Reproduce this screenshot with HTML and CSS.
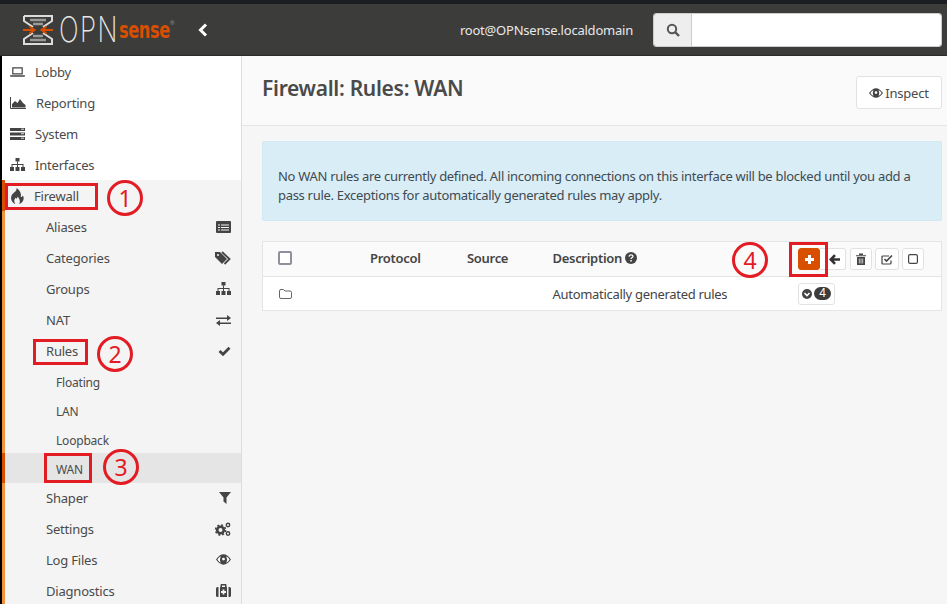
FILE: index.html
```html
<!DOCTYPE html>
<html lang="en">
<head>
<meta charset="utf-8">
<title>Firewall: Rules: WAN</title>
<link rel="stylesheet" href="styles.css">
</head>
<body>
<div class="page">
  <header class="topbar">
    <div class="logo">
      <svg class="logo-mark" viewBox="0 0 30 30" width="30" height="30">
        <path d="M1 1H29V6L20 12M10 12L1 6V1M10 18L1 24V29H29V24L20 18" fill="none" stroke="#dcdcdc" stroke-width="2"/>
        <path d="M7 5H23M10 9H20M10 21H20M7 25H23" stroke="#9a9a9a" stroke-width="2.500"/>
        <path d="M0 15H11M6.500 11.500L11.500 15L6.500 18.500M30 15H19M23.500 11.500L18.500 15L23.500 18.500" fill="none" stroke="#d94f00" stroke-width="2"/>
      </svg>
      <span class="logo-opn">OPN</span><span class="logo-sense">sense</span><span class="logo-reg">®</span>
    </div>
    <svg class="collapse" viewBox="0 0 10 14" width="10" height="14"><path d="M8 1.500L2.500 7L8 12.500" fill="none" stroke="#fff" stroke-width="3"/></svg>
    <span class="user">root@OPNsense.localdomain</span>
    <div class="search">
      <span class="search-btn"><svg viewBox="0 0 14 14" width="14" height="14"><circle cx="6" cy="6" r="4.200" fill="none" stroke="#555" stroke-width="2"/><path d="M9 9L13 13" stroke="#555" stroke-width="2.400"/></svg></span>
      <span class="search-input"></span>
    </div>
  </header>
  <div class="body">
    <nav class="sidebar">
      <a class="row top"><svg class="ico-l" viewBox="0 0 16 12" width="15" height="12"><path d="M3 1.500H13V8H3Z" fill="none" stroke="#444" stroke-width="1.300"/><path d="M0 9.500H16V10.500L15 11H1L0 10.500Z" fill="#444"/></svg>Lobby</a>
      <a class="row top"><svg class="ico-l" viewBox="0 0 16 12" width="16" height="12"><path d="M0.500 0V11.500H16" fill="none" stroke="#444"/><path d="M2 10.500V7L5 4L7.500 6L10 2L13 6L15.500 8V10.500Z" fill="#444"/></svg>Reporting</a>
      <a class="row top"><svg class="ico-l" viewBox="0 0 15 12" width="15" height="12"><path d="M0 0H15V3H0ZM0 4.500H15V7.500H0ZM0 9H15V12H0Z" fill="#444"/><path d="M11 1.200H14M11 5.700H14M11 10.200H14" stroke="#ddd"/></svg>System</a>
      <a class="row top"><svg class="ico-l" viewBox="0 0 15 13" width="15" height="13"><use href="#sitemap"/></svg>Interfaces</a>
      <div class="fw">
        <a class="row top active"><svg class="ico-l flame" viewBox="0 0 14 15" width="15" height="16"><path d="M6 0C7 3 3 4 1.500 7C0 10 2 14 5 15C3.500 13 3.500 10.500 5.500 9C5.500 11 7 10 7 8C9 10 10 13 8.500 15C12 14 14 10 12 7C11.500 8 11 8.500 10 8.500C11 5 9 2 6 0Z" fill="#444"/></svg>Firewall</a>
        <a class="row sub">Aliases<svg viewBox="0 0 15 12" width="15" height="12"><path d="M1 0H14Q15 0 15 1V11Q15 12 14 12H1Q0 12 0 11V1Q0 0 1 0Z" fill="#444"/><path d="M2 4H4M5 4H13M2 6.500H4M5 6.500H13M2 9H4M5 9H13" stroke="#f4f4f4" stroke-width="1.200"/></svg></a>
        <a class="row sub">Categories<svg viewBox="0 0 16 14" width="16" height="14"><path d="M0 1V6L7 13L12 8L5 1Z" fill="#444"/><path d="M7 1L14.500 8L9.500 13" fill="none" stroke="#444" stroke-width="1.800"/><circle cx="3" cy="4" r="1" fill="#f4f4f4"/></svg></a>
        <a class="row sub">Groups<svg viewBox="0 0 15 13" width="15" height="13"><use href="#sitemap"/></svg></a>
        <a class="row sub">NAT<svg viewBox="0 0 15 12" width="15" height="12"><path d="M0 3.500H11V1L15 4L11 7V5H0ZM15 8.500H4V6L0 9L4 12V10H15Z" fill="#444"/></svg></a>
        <a class="row sub">Rules<svg viewBox="0 0 13 10" width="13" height="10"><path d="M1.500 5L5 8.300L11.500 1.800" fill="none" stroke="#444" stroke-width="2.800"/></svg></a>
        <a class="row subsub first">Floating</a>
        <a class="row subsub">LAN</a>
        <a class="row subsub">Loopback</a>
        <a class="row subsub current">WAN</a>
        <a class="row sub">Shaper<svg viewBox="0 0 12 12" width="12" height="12"><path d="M0 0H12L7.500 5.500V12L4.500 9.500V5.500Z" fill="#444"/></svg></a>
        <a class="row sub">Settings<svg viewBox="0 0 16 14" width="16" height="14"><circle cx="5.500" cy="8" r="3.300" fill="none" stroke="#444" stroke-width="2.600"/><circle cx="5.500" cy="8" r="5" fill="none" stroke="#444" stroke-width="1.600" stroke-dasharray="2 1.930"/><circle cx="13" cy="3" r="1.700" fill="none" stroke="#444" stroke-width="1.400"/><circle cx="13" cy="11.500" r="1.700" fill="none" stroke="#444" stroke-width="1.400"/></svg></a>
        <a class="row sub">Log Files<svg viewBox="0 0 16 11" width="15" height="11"><use href="#eye"/></svg></a>
        <a class="row sub">Diagnostics<svg viewBox="0 0 15 13" width="15" height="13"><path d="M4.500 3V1Q4.500 0 5.500 0H9.500Q10.500 0 10.500 1V3H9V1.500H6V3ZM0 4.500Q0 3 1.500 3H2.500V13H1.500Q0 13 0 11.500ZM4 3H11V13H4ZM12.500 3H13.500Q15 3 15 4.500V11.500Q15 13 13.500 13H12.500Z" fill="#444"/><path d="M7.500 5.500V10.500M5 8H10" stroke="#f4f4f4" stroke-width="1.800"/></svg></a>
      </div>
    </nav>
    <main class="main">
      <div class="titlebar">
        <h1>Firewall: Rules: WAN</h1>
        <button class="inspect"><svg viewBox="0 0 16 11" width="14" height="10"><use href="#eye"/></svg>Inspect</button>
      </div>
      <div class="content">
        <div class="alert">No WAN rules are currently defined. All incoming connections on this interface will be blocked until you add a pass rule. Exceptions for automatically generated rules may apply.</div>
        <div class="table">
          <div class="thead">
            <span class="c-check"><span class="checkbox"></span></span>
            <span class="c-proto">Protocol</span>
            <span class="c-src">Source</span>
            <span class="c-desc">Description <svg viewBox="0 0 12 12" width="12" height="12"><circle cx="6" cy="6" r="6" fill="#444"/><path d="M4 4.600Q4.200 2.800 6 2.800Q8 2.800 8 4.300Q8 5.300 6.700 5.800Q6 6.100 6 7" fill="none" stroke="#fafafa" stroke-width="1.300"/><path d="M5.200 8H6.800V9.500H5.200Z" fill="#fafafa"/></svg></span>
            <span class="actions">
              <button class="btn add"><svg viewBox="0 0 11 11" width="11" height="11"><path d="M5.500 1V10M1 5.500H10" stroke="#fff" stroke-width="3"/></svg></button>
              <button class="btn plain"><svg viewBox="0 0 11 11" width="11" height="11"><path d="M6 1.200L1.800 5.500L6 9.800M2.500 5.500H11" fill="none" stroke="#333" stroke-width="2.600"/></svg></button>
              <button class="btn"><svg viewBox="0 0 10 12" width="10" height="12"><path d="M0 2.200H10V3.300H0ZM3 2V0.600H7V2M1 4H9V12H1Z" fill="#444"/><path d="M3.300 5.500V10.500M5 5.500V10.500M6.700 5.500V10.500" stroke="#fff" stroke-width=".7"/></svg></button>
              <button class="btn wider"><svg viewBox="0 0 12 11" width="12" height="11"><path d="M10 6.500V9Q10 10 9 10H2Q1 10 1 9V3Q1 2 2 2H8" fill="none" stroke="#444" stroke-width="1.200"/><path d="M3.500 5L5.500 7L11 1.500" fill="none" stroke="#444" stroke-width="1.600"/></svg></button>
              <button class="btn"><svg viewBox="0 0 10 10" width="10" height="10"><rect x=".6" y=".6" width="8.800" height="8.800" rx="1.500" fill="none" stroke="#444" stroke-width="1.200"/></svg></button>
            </span>
          </div>
          <div class="trow">
            <span class="c-check"><svg viewBox="0 0 13 10" width="13" height="10"><path d="M.5 2Q.5 .5 2 .5H4.500L6 2H11Q12.500 2 12.500 3.500V8Q12.500 9.500 11 9.500H2Q.5 9.500 .5 8Z" fill="none" stroke="#666"/></svg></span>
            <span class="c-proto"></span>
            <span class="c-src"></span>
            <span class="c-desc">Automatically generated rules</span>
            <span class="actions">
              <button class="btn count"><svg viewBox="0 0 10 10" width="10" height="10"><circle cx="5" cy="5" r="5" fill="#444"/><path d="M2.500 4L5 6.500L7.500 4" fill="none" stroke="#fff" stroke-width="1.600"/></svg><span class="badge">4</span></button>
            </span>
          </div>
        </div>
      </div>
    </main>
  </div>
  <span class="mark m1"></span>
  <span class="mark m2"></span>
  <span class="mark m3"></span>
  <span class="mark m4"></span>
  <span class="num n1">1</span>
  <span class="num n2">2</span>
  <span class="num n3">3</span>
  <span class="num n4">4</span>
</div>
<svg class="defs" width="0" height="0">
  <defs>
    <g id="sitemap" fill="#444"><path d="M5.500 0H9.500V3.500H5.500ZM0 9H4V13H0ZM5.500 9H9.500V13H5.500ZM11 9H15V13H11Z"/><path d="M7 3.500H8V6H13.500V9H12.500V7H8V9H7V7H2.500V9H1.500V6H7Z"/></g>
    <g id="eye"><path d="M0 5.500Q4 0 8 0Q12 0 16 5.500Q12 11 8 11Q4 11 0 5.500Z" fill="#444"/><path d="M1.500 5.500Q3 3 5 2Q3.500 5.500 5 9Q3 8 1.500 5.500ZM11 2Q13 3 14.500 5.500Q13 8 11 9Q12.500 5.500 11 2Z" fill="#fff"/><circle cx="8" cy="5" r="1.500" fill="#fff"/></g>
  </defs>
</svg>
</body>
</html>
```

FILE: styles.css
```css
* { box-sizing: border-box; }
html, body { margin: 0; height: 100%; overflow: hidden; }
body { background: #000; font-family: "Noto Sans", "Open Sans", sans-serif; font-size: 13px; color: #444; letter-spacing: -0.2px; }
.page { position: relative; width: 947px; height: 604px; display: flex; flex-direction: column; overflow: hidden; }
.defs { position: absolute; }

.topbar { height: 56px; flex: none; display: flex; align-items: center; background: #3c3c3b; border-top: 4px solid #1c1d22; border-bottom: 1px solid #2b2b2a; padding-left: 23px; }
.logo { display: flex; align-items: center; width: 173px; height: 32px; flex: none; }
.logo-mark { flex: none; }
.logo-opn { font-family: "Inter", sans-serif; font-weight: 200; font-size: 26px; letter-spacing: 1.500px; color: #e8e8e8; margin-left: 6px; line-height: 30px; transform: scaleY(1.35); }
.logo-sense { font-family: "DejaVu Sans Condensed", "DejaVu Sans", sans-serif; font-weight: 700; font-size: 18px; letter-spacing: -0.4px; color: #d94f00; margin-top: 4px; line-height: 22px; transform: scaleY(1.25); transform-origin: 50% 80%; }
.logo-reg { font-size: 6px; color: #888; align-self: flex-start; margin-top: 5px; }
.collapse { flex: none; margin-left: 2px; }
.user { margin-left: auto; color: #e8e8e8; font-size: 13px; letter-spacing: -0.22px; }
.search { display: flex; width: 289px; height: 34px; margin: 0 5px 0 20px; border-radius: 3px; overflow: hidden; border: 1px solid #ccc; flex: none; }
.search-btn { width: 38px; background: #eee; border-right: 1px solid #ccc; display: flex; align-items: center; justify-content: center; }
.search-input { flex: 1; background: #fff; }

.body { flex: 1; display: flex; min-height: 0; padding-left: 2px; }
.sidebar { width: 240px; flex: none; background: #fff; border-right: 1px solid #ddd; overflow: hidden; }
.row { display: flex; align-items: center; height: 31px; color: #4a4a4a; }
.row svg { flex: none; }
.top { padding-left: 8px; }
.ico-l { margin-right: 10px; }
.ico-l.flame { margin-right: 9px; }
.fw { background: #f4f4f4; border-left: 3px solid #f0933f; }
.fw .row { position: relative; }
.fw .top { padding-left: 5px; }
.active::before, .current::before { content: ""; position: absolute; left: -3px; top: 0; bottom: 0; width: 3px; background: #d94f00; }
.sub { justify-content: space-between; padding: 0 10px 0 41px; }
.subsub { height: 29px; padding-left: 51px; font-size: 12px; }
.first { margin-top: 2px; }
.current { background: #e5e5e5; height: 30px; margin: -2px 0 -1px; padding-top: 3px; }

.main { flex: 1; background: #f6f6f6; display: flex; flex-direction: column; min-width: 0; }
.titlebar { height: 70px; flex: none; background: #fafafa; border-bottom: 1px solid #e5e5e5; display: flex; justify-content: space-between; align-items: flex-start; padding: 20px 5px 0 20px; }
h1 { margin: 0; font-size: 21px; font-weight: 600; line-height: 24px; color: #4a4a4a; letter-spacing: -0.3px; }
.inspect { height: 33px; width: 86px; display: flex; align-items: center; justify-content: center; gap: 2px; font: inherit; color: #4a4a4a; background: #fff; border: 1px solid #e2e2e2; border-radius: 3px; padding: 0; letter-spacing: inherit; }
.content { padding: 15px 5px 0 20px; letter-spacing: -0.3px; }
.alert { height: 80px; background: #d9edf7; border: 1px solid #d2e8f2; border-radius: 2px; padding: 25px 15px 0; line-height: 19px; color: #3f4a50; }
.table { margin-top: 20px; border: 1px solid #e5e5e5; background: #fff; }
.thead, .trow { display: flex; align-items: center; }
.thead { height: 35px; background: #fafafa; border-bottom: 1px solid #e5e5e5; font-weight: 600; }
.thead .c-check, .thead .c-proto, .thead .c-src, .thead .c-desc { margin-top: -2px; }
.trow { height: 33px; }
.c-check { width: 107px; padding-left: 15px; display: flex; align-items: center; flex: none; }
.trow .c-check { padding-left: 16px; }
.checkbox { width: 14px; height: 14px; border: 2px solid #8f8f9d; border-radius: 2px; background: #fff; }
.c-proto { width: 97px; flex: none; }
.c-src { width: 85.500px; flex: none; }
.c-desc { width: 245.500px; flex: none; display: flex; align-items: center; gap: 3px; white-space: nowrap; }
.actions { display: flex; align-items: center; gap: 3px; }
.btn { width: 22px; height: 22px; padding: 0; display: flex; align-items: center; justify-content: center; background: #fff; border: 1px solid #e2e2e2; border-radius: 3px; }
.wider { width: 24px; }
.add { background: #d94f00; border-color: #d94f00; }
.plain { width: 26px; margin: 0 1px 0 -3px; border-left: 0; border-radius: 0 3px 3px 0; padding-left: 3px; }
.count { width: 37px; gap: 2px; }
.badge { background: #3c3c3c; color: #fff; font-size: 12px; width: 17px; height: 13px; line-height: 13px; border-radius: 7px; text-align: center; letter-spacing: 0; }

.mark { position: absolute; border: 3px solid #e31b23; }
.m1 { left: 5px; top: 183px; width: 93px; height: 27px; }
.m2 { left: 33px; top: 339px; width: 55px; height: 26px; }
.m3 { left: 44px; top: 453px; width: 48px; height: 30px; }
.m4 { left: 789px; top: 242px; width: 39px; height: 35px; }
.num { position: absolute; width: 36px; height: 36px; border: 3px solid #e31b23; border-radius: 50%; color: #e31b23; font-family: "Noto Sans", sans-serif; font-size: 23px; line-height: 30px; text-align: center; letter-spacing: 0; }
.n1 { left: 107px; top: 180px; }
.n2 { left: 97px; top: 336px; }
.n3 { left: 103px; top: 449px; }
.n4 { left: 732px; top: 242px; }
```
